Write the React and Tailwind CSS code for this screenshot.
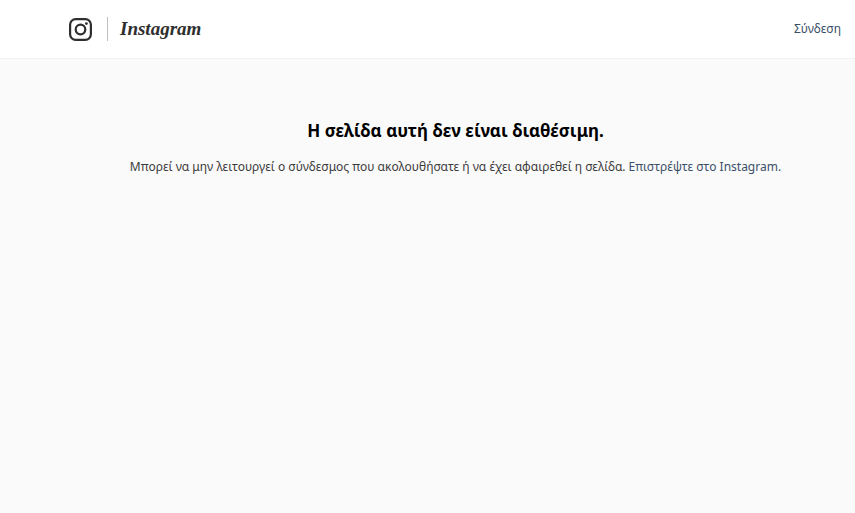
function CameraLogo() {
  return (
    <svg viewBox="0 0 24 24" className="size-6" fill="none" aria-hidden="true">
      <rect x="2.1" y="2.1" width="20.8" height="20.8" rx="5.6" stroke="#2e2e2e" strokeWidth="2.2" />
      <circle cx="12.5" cy="12.5" r="4.8" stroke="#2e2e2e" strokeWidth="2.2" />
      <circle cx="18.4" cy="6.6" r="1.4" fill="#2e2e2e" />
    </svg>
  );
}

function Header() {
  return (
    <header className="border-b border-[#f1f1f1] bg-white">
      <div className="flex h-[58px] items-center justify-between pr-3.5 pl-[68px]">
        <a href="/" className="flex items-center">
          <CameraLogo />
          <span className="mr-3 ml-[15px] h-6 w-px bg-[#c0c0c0]" />
          <span className="font-['Liberation_Serif',serif] text-[19px] leading-6 font-bold text-[#2e2e2e] italic">
            Instagram
          </span>
        </a>
        <a href="/login" className="text-xs text-[#3a5068]">
          Σύνδεση
        </a>
      </div>
    </header>
  );
}

export default function App() {
  return (
    <div className="min-h-screen bg-[#fafafa] font-['Noto_Sans','Open_Sans',sans-serif]">
      <Header />
      <main className="px-10 pt-[58px] pl-24 text-center">
        <h2 className="text-[17px] leading-7 font-bold text-black">
          Η σελίδα αυτή δεν είναι διαθέσιμη.
        </h2>
        <p className="mt-3 text-xs leading-5 text-[#3c3c3c]">
          Μπορεί να μην λειτουργεί ο σύνδεσμος που ακολουθήσατε ή να έχει
          αφαιρεθεί η σελίδα.{" "}
          <a href="/" className="text-[#3a5068]">
            Επιστρέψτε στο Instagram.
          </a>
        </p>
      </main>
    </div>
  );
}
